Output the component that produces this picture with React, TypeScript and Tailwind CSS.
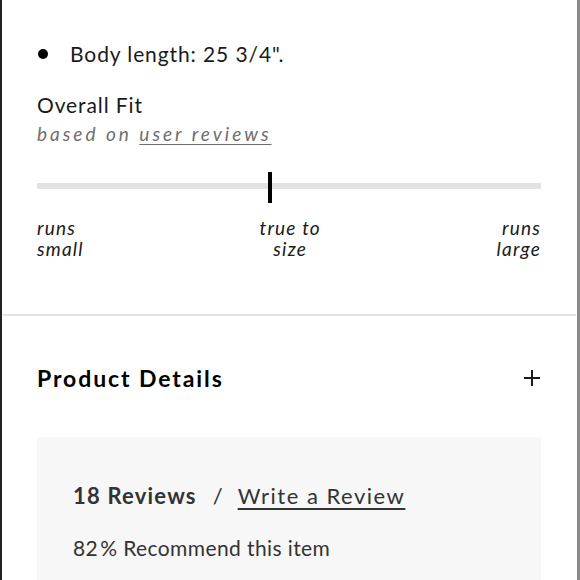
export default function App() {
  return (
    <div className="w-[580px] h-[580px] overflow-hidden bg-white border-l-2 border-[#222] border-r-[3px] border-r-[#8a8a8a] font-['Lato',sans-serif] text-[#1a1a1a]">
      <div className="pl-[35px] pr-[36px] pt-[40px]">
        <div className="flex items-center h-[28px] text-[21px]">
          <span className="w-[10px] h-[10px] rounded-full bg-black ml-[1px]" />
          <span className="ml-[22px] tracking-[0.9px]">Body length: 25 3/4".</span>
        </div>

        <div className="mt-[23px] text-[21px] leading-[28px] tracking-[0.9px]">Overall Fit</div>
        <div className="mt-[2px] text-[19px] leading-[26px] italic text-[#6e6e6e] tracking-[3px]">
          based on <span className="underline underline-offset-[3px] decoration-[1px]">user reviews</span>
        </div>

        <div className="relative mt-[36px] h-[6px] bg-[#e2e2e2]">
          <div className="absolute left-[231px] top-[-11px] w-[4px] h-[31px] bg-black" />
        </div>

        <div className="mt-[28px] flex justify-between text-[19px] leading-[21px] italic tracking-[1.2px]">
          <div className="text-left">
            runs
            <br />
            small
          </div>
          <div className="text-center">
            true to
            <br />
            size
          </div>
          <div className="text-right">
            runs
            <br />
            large
          </div>
        </div>
      </div>

      <div className="mt-[55px] h-[2px] bg-[#e3e3e3] mx-[1px]" />

      <div className="pl-[35px] pr-[36px]">
        <div className="mt-[47px] flex items-center justify-between h-[30px]">
          <span className="text-[23px] font-bold tracking-[1.9px] text-black">Product Details</span>
          <svg width="18" height="18" viewBox="0 0 18 18">
            <path d="M9 1v16M1 9h16" stroke="#1a1a1a" strokeWidth="2" />
          </svg>
        </div>

        <div className="mt-[44px] bg-[#f7f7f7] h-[200px] px-[36px] pt-[44px] text-[#333]">
          <div className="flex items-center h-[28px] text-[22px]">
            <span className="font-bold tracking-[1.2px]">18 Reviews</span>
            <span className="ml-[16px]">/</span>
            <span className="ml-[15px] underline underline-offset-[4px] decoration-[1.5px] tracking-[1.5px]">Write a Review</span>
          </div>
          <div className="mt-[26px] text-[21px] leading-[26px] tracking-[0.4px]">
            82<span className="ml-[2px]">%</span> Recommend this item
          </div>
        </div>
      </div>
    </div>
  );
}
